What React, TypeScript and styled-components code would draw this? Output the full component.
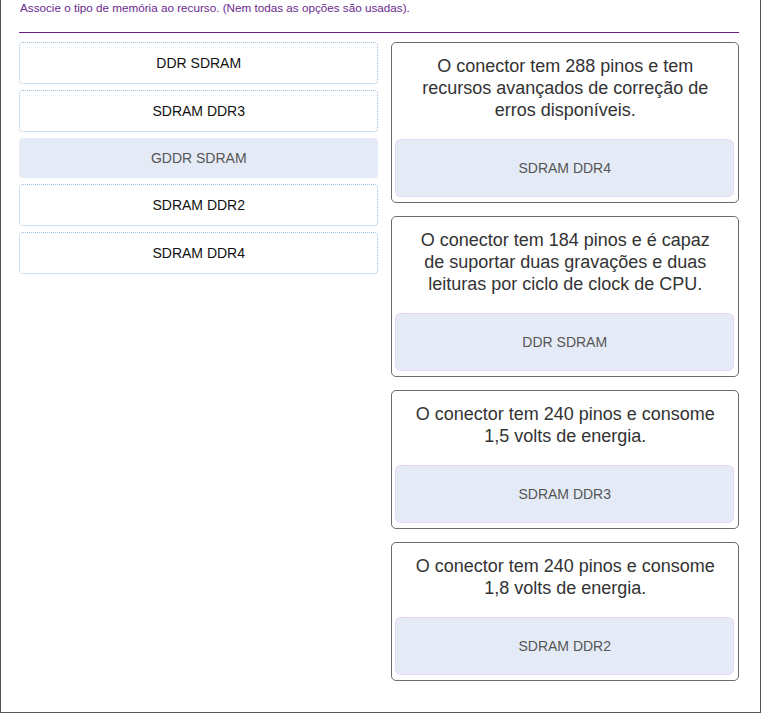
import React from "react";
import styled, { createGlobalStyle } from "styled-components";

const Global = createGlobalStyle`
  html, body { margin: 0; padding: 0; background: #fff; }
  body { font-family: "Liberation Sans", Arial, sans-serif; }
`;

const Frame = styled.div`
  box-sizing: border-box;
  width: 761px;
  height: 713px;
  border: 1px solid #555;
  border-top: none;
  padding: 0 21px 0 18px;
  overflow: hidden;
`;

const Header = styled.div`
  font-size: 11.7px;
  line-height: 14px;
  color: #6b2a8f;
  padding: 1px 0 0 1px;
  height: 17px;
  border-bottom: 1px solid #6a1b8a;
  padding-bottom: 14px;
`;

const Columns = styled.div`
  display: flex;
  gap: 13px;
  margin-top: 9px;
  align-items: flex-start;
`;

const OptionList = styled.div`
  width: 360px;
  display: flex;
  flex-direction: column;
  gap: 6px;
`;

const Option = styled.div<{ $used?: boolean }>`
  box-sizing: border-box;
  height: ${(p) => (p.$used ? "40px" : "42px")};
  display: flex;
  align-items: center;
  justify-content: center;
  font-size: 14px;
  border-radius: 4px;
  color: ${(p) => (p.$used ? "#555" : "#111")};
  background: ${(p) => (p.$used ? "#e4ebf7" : "#fff")};
  border: ${(p) => (p.$used ? "none" : "1px dotted #9fc0de")};
`;

const Targets = styled.div`
  width: 348px;
  display: flex;
  flex-direction: column;
  gap: 13px;
`;

const Card = styled.div`
  box-sizing: border-box;
  border: 1px solid #6c6c6c;
  border-radius: 5px;
  padding: 12px 4px 5px 3px;
  display: flex;
  flex-direction: column;
`;

const Prompt = styled.div`
  font-size: 18px;
  line-height: 22px;
  color: #333;
  text-align: center;
  padding: 0 16px 0 17px;
  margin-bottom: 18px;
`;

const DropZone = styled.div`
  box-sizing: border-box;
  height: 58px;
  display: flex;
  align-items: center;
  justify-content: center;
  background: #e4ebf7;
  border: 1px dotted #e8c4ee;
  border-radius: 6px;
  font-size: 14px;
  color: #555;
`;

const options = [
  { label: "DDR SDRAM" },
  { label: "SDRAM DDR3" },
  { label: "GDDR SDRAM", used: true },
  { label: "SDRAM DDR2" },
  { label: "SDRAM DDR4" },
];

const targets = [
  {
    text: "O conector tem 288 pinos e tem recursos avançados de correção de erros disponíveis.",
    answer: "SDRAM DDR4",
  },
  {
    text: "O conector tem 184 pinos e é capaz de suportar duas gravações e duas leituras por ciclo de clock de CPU.",
    answer: "DDR SDRAM",
  },
  {
    text: "O conector tem 240 pinos e consome 1,5 volts de energia.",
    answer: "SDRAM DDR3",
  },
  {
    text: "O conector tem 240 pinos e consome 1,8 volts de energia.",
    answer: "SDRAM DDR2",
  },
];

export default function App() {
  return (
    <>
      <Global />
      <Frame>
        <Header>Associe o tipo de memória ao recurso. (Nem todas as opções são usadas).</Header>
        <Columns>
          <OptionList>
            {options.map((o) => (
              <Option key={o.label} $used={o.used}>
                {o.label}
              </Option>
            ))}
          </OptionList>
          <Targets>
            {targets.map((t) => (
              <Card key={t.text}>
                <Prompt>{t.text}</Prompt>
                <DropZone>{t.answer}</DropZone>
              </Card>
            ))}
          </Targets>
        </Columns>
      </Frame>
    </>
  );
}
